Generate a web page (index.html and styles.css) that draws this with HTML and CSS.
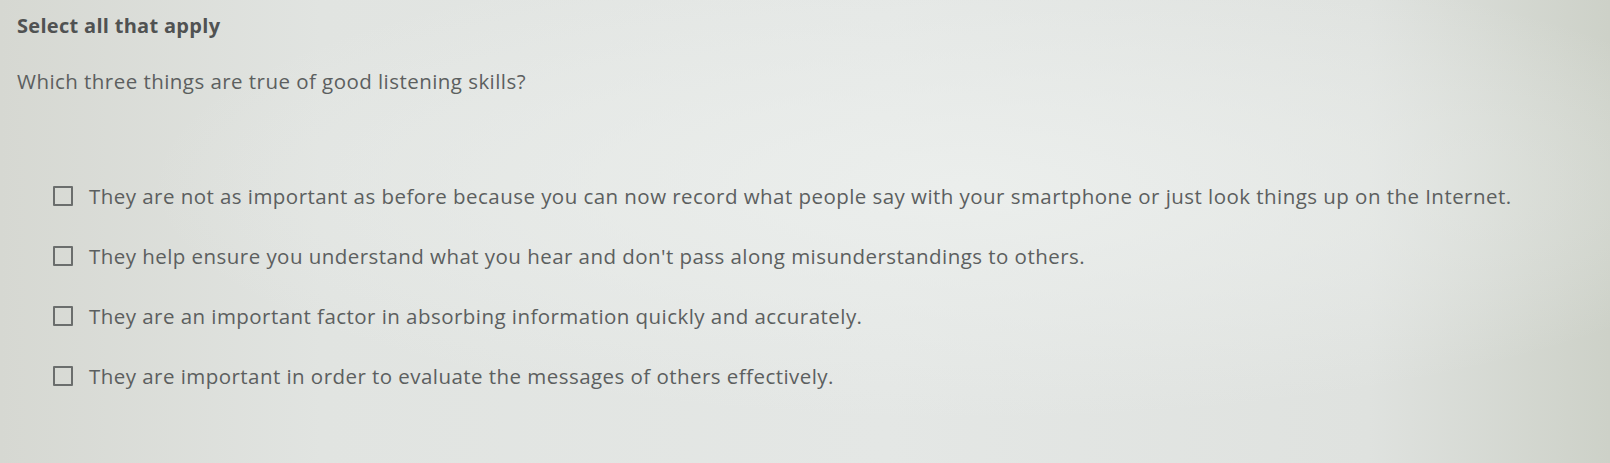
FILE: index.html
```html
<!DOCTYPE html>
<html lang="en">
<head>
<meta charset="utf-8">
<title>Select all that apply</title>
<link rel="stylesheet" href="styles.css">
</head>
<body>
<main class="question">
  <h1 class="prompt-type">Select all that apply</h1>
  <p class="prompt">Which three things are true of good listening skills?</p>
  <ul class="options">
    <li class="option"><span class="box"></span><span class="label">They are not as important as before because you can now record what people say with your smartphone or just look things up on the Internet.</span></li>
    <li class="option"><span class="box"></span><span class="label">They help ensure you understand what you hear and don't pass along misunderstandings to others.</span></li>
    <li class="option"><span class="box"></span><span class="label">They are an important factor in absorbing information quickly and accurately.</span></li>
    <li class="option"><span class="box"></span><span class="label">They are important in order to evaluate the messages of others effectively.</span></li>
  </ul>
</main>
</body>
</html>
```
FILE: styles.css
```css
html, body {
  margin: 0;
  height: 100%;
}
body {
  background:
    radial-gradient(ellipse at 60% 40%, rgba(236,239,237,0.9) 0%, rgba(236,239,237,0) 60%),
    linear-gradient(90deg, #d6d8d2 0%, #e1e4e1 20%, #e4e7e5 55%, #dfe2df 85%, #cdd1c8 100%);
  font-family: "Open Sans", Lato, sans-serif;
  color: #5c5f5f;
  overflow: hidden;
}
.question {
  padding: 14px 0 0 17px;
}
.prompt-type {
  margin: 0;
  font-size: 20px;
  letter-spacing: 0.3px;
  font-weight: 700;
  color: #505252;
  line-height: 24px;
}
.prompt {
  margin: 31px 0 0;
  font-size: 20.5px;
  letter-spacing: 0.45px;
  line-height: 24px;
}
.options {
  list-style: none;
  margin: 91px 0 0;
  padding: 0 0 0 36px;
  display: flex;
  flex-direction: column;
  gap: 36px;
}
.option {
  display: flex;
  align-items: center;
  gap: 16px;
  font-size: 20.5px;
  letter-spacing: 0.45px;
  line-height: 24px;
}
.box {
  width: 16px;
  height: 16px;
  border: 2px solid #6b6e6d;
  border-radius: 1px;
  flex: none;
}
```
